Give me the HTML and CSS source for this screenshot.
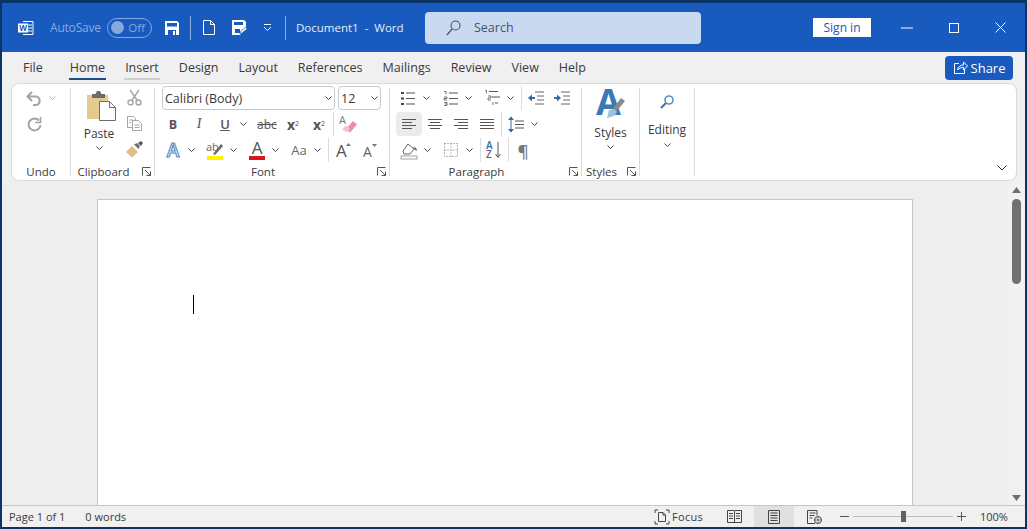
FILE: index.html
```html
<!DOCTYPE html>
<html lang="en">
<head>
  <meta charset="UTF-8" />
  <title>Document1 - Word</title>
  <link rel="stylesheet" href="styles.css">
</head>
<body>
  <svg class="defs" width="0" height="0">
    <symbol id="caret" viewBox="0 0 7 4"><path d="M.5.5l3 3 3-3" fill="none" stroke="#444" stroke-width="1"/></symbol>
    <symbol id="launch" viewBox="0 0 9 9"><path d="M.5 8.500V.5h8M3 3l5.500 5.500M8.500 4.500v4h-4" fill="none" stroke="#555"/></symbol>
  </svg>

  <div class="window">
    <!-- title bar -->
    <header class="titlebar">
      <svg class="tb-word" width="16" height="16" viewBox="0 0 16 16">
        <path d="M5 1.500h10v13H5" fill="none" stroke="#fff"/>
        <path d="M10 5h4M10 8h4M10 11h4" stroke="#fff"/>
        <rect x="0" y="3.500" width="10" height="9" fill="#fff"/>
        <text x="5" y="11" text-anchor="middle" class="tb-w">W</text>
      </svg>
      <span class="autosave">AutoSave</span>
      <span class="toggle"><i></i><b>Off</b></span>
      <svg class="tb-save" width="14" height="14" viewBox="0 0 14 14">
        <path d="M0 0h12l2 2v12H0z" fill="#fff"/>
        <path d="M2 2h10v3.500H2zM3 9h8v5H3z" fill="#185abd"/>
        <path d="M8 10h2v4H8z" fill="#fff"/>
      </svg>
      <span class="tb-sep"></span>
      <svg class="tb-new" width="12" height="15" viewBox="0 0 12 15">
        <path d="M.5.5h7l4 4v10H.500zM7.500.5v4h4" fill="none" stroke="#fff"/>
      </svg>
      <svg class="tb-saveas" width="15" height="15" viewBox="0 0 15 15">
        <path d="M0 0h12l2 2v6l-6 7H0z" fill="#fff"/>
        <path d="M2 2h9v3H2zM3 9h5v4H3z" fill="#185abd"/>
        <path d="M8 14l1-3 5-4 1 2-5 4z" fill="#fff" stroke="#185abd" stroke-width=".7"/>
      </svg>
      <svg class="tb-more" width="9" height="7" viewBox="0 0 9 7">
        <path d="M1 .5h7" stroke="#fff"/><path d="M1 3l3.500 3.500L8 3" fill="none" stroke="#fff"/>
      </svg>
      <span class="tb-sep tb-sep2"></span>
      <span class="doc-title">Document1&nbsp; - &nbsp;Word</span>
      <div class="search">
        <svg width="15" height="16" viewBox="0 0 15 16">
          <circle cx="9.500" cy="5.500" r="4.500" fill="none" stroke="#44546a" stroke-width="1.100"/>
          <path d="M6 9L1 15" stroke="#44546a" stroke-width="1.200"/>
        </svg>
        <span>Search</span>
      </div>
      <span class="signin">Sign in</span>
      <div class="winbtn"><svg width="12" height="2" viewBox="0 0 12 2"><path d="M0 1h12" stroke="#fff"/></svg></div>
      <div class="winbtn"><svg width="10" height="10" viewBox="0 0 10 10"><rect x=".5" y=".5" width="9" height="9" fill="none" stroke="#fff"/></svg></div>
      <div class="winbtn"><svg width="11" height="11" viewBox="0 0 11 11"><path d="M.5.5l10 10M10.500.5l-10 10" stroke="#fff"/></svg></div>
    </header>

    <!-- tabs -->
    <nav class="tabs">
      <span class="tab tab-file">File</span>
      <span class="tab active">Home</span>
      <span class="tab hover">Insert</span>
      <span class="tab">Design</span>
      <span class="tab">Layout</span>
      <span class="tab">References</span>
      <span class="tab">Mailings</span>
      <span class="tab">Review</span>
      <span class="tab">View</span>
      <span class="tab">Help</span>
      <span class="share">
        <svg width="15" height="15" viewBox="0 0 15 15"><path d="M6 3.500H1.500v10h10V9M4.500 10c.5-3.500 3-5 6-5V2l4 4-4 4V7.500c-2.500 0-4.500.5-6 2.500z" fill="none" stroke="#fff"/></svg>
        Share
      </span>
    </nav>

    <!-- ribbon -->
    <section class="ribbon">
      <div class="group g-undo">
        <div class="rows">
          <div class="row row-top">
            <span class="tool">
              <svg width="16" height="15" viewBox="0 0 16 15"><path d="M6 1L1.500 5.500 6 10M2 5.500h8a4.300 4.300 0 0 1 0 8.500H7" fill="none" stroke="#a3a3a3" stroke-width="2"/></svg>
            </span>
            <span class="caret light"><svg width="7" height="4"><use href="#caret"/></svg></span>
          </div>
          <div class="row">
            <span class="tool">
              <svg width="15" height="15" viewBox="0 0 15 15"><path d="M12 3.500A6 6 0 1 0 13.500 8" fill="none" stroke="#a3a3a3" stroke-width="2"/><path d="M13.500 0v5.500H8" fill="none" stroke="#a3a3a3" stroke-width="1.600"/></svg>
            </span>
          </div>
        </div>
        <div class="group-label">Undo</div>
      </div>
      <span class="group-sep"></span>

      <div class="group g-clip">
        <div class="clip-body">
          <div class="big-btn paste">
            <svg class="paste-ico" width="29" height="30" viewBox="0 0 29 30">
              <rect x="0" y="4" width="21" height="24" fill="#e6c98c"/>
              <path d="M5 3h3.500l1.500-3h3l1.500 3H18v4H5z" fill="#6b6b6b"/>
              <path d="M12.500 10.500h10l6 6v13h-16z" fill="#fff" stroke="#6e6e6e"/>
              <path d="M22.500 10.500v6h6" fill="none" stroke="#6e6e6e"/>
            </svg>
            <span>Paste</span>
            <svg width="7" height="4"><use href="#caret"/></svg>
          </div>
          <div class="stack">
            <span class="tool">
              <svg width="15" height="16" viewBox="0 0 15 16" fill="none" stroke="#a6a6a6" stroke-width="1.400"><path d="M3 0l7 10M12 0L5 10"/><circle cx="3.500" cy="12.500" r="2.500"/><circle cx="11.500" cy="12.500" r="2.500"/></svg>
            </span>
            <span class="tool">
              <svg width="15" height="15" viewBox="0 0 15 15" fill="#fff" stroke="#a6a6a6"><path d="M.5.5h6l2 2v9h-8z"/><path d="M5.500 4.500h6l3 3v7h-9z"/><path d="M2 4h4M2 6.500h2M7.500 9h5M7.500 11.500h5"/></svg>
            </span>
            <span class="tool">
              <svg width="17" height="17" viewBox="0 0 17 17"><path d="M0 11l6-6 6 6-6 5.500z" fill="#e0bd85"/><path d="M8 3.500l3-1.500 3 3-1.500 3z" fill="#6d6d6d"/><path d="M12 2l3-2 2 2-2 3z" fill="#555"/></svg>
            </span>
          </div>
        </div>
        <div class="group-label with-launch"><span>Clipboard</span><svg width="9" height="9"><use href="#launch"/></svg></div>
      </div>
      <span class="group-sep"></span>

      <div class="group g-font">
        <div class="rows">
          <div class="row row-top selects">
            <span class="select sel-font">Calibri (Body)<svg width="7" height="4"><use href="#caret"/></svg></span>
            <span class="select sel-size">12<svg width="7" height="4"><use href="#caret"/></svg></span>
          </div>
          <div class="row">
            <span class="tool fx fx-b">B</span>
            <span class="tool fx fx-i">I</span>
            <span class="tool fx fx-u">U</span>
            <span class="caret"><svg width="7" height="4"><use href="#caret"/></svg></span>
            <span class="tool fx fx-s">abc</span>
            <span class="tool fx fx-x">x<sub>2</sub></span>
            <span class="tool fx fx-x">x<sup>2</sup></span>
            <span class="sep sep-gap1"></span>
            <span class="tool">
              <svg width="18" height="18" viewBox="0 0 18 18"><text x="0" y="9" class="ico-txt">A</text><path d="M7 14l7-8 4 3.500-7 8z" fill="#ee8fa0"/><path d="M3 15l4-5 4 4-2.500 3z" fill="#f6c3cb"/></svg>
            </span>
          </div>
          <div class="row">
            <span class="tool">
              <svg width="18" height="18" viewBox="0 0 18 18"><text x="9" y="16" text-anchor="middle" class="ico-a-fx">A</text></svg>
            </span>
            <span class="caret"><svg width="7" height="4"><use href="#caret"/></svg></span>
            <span class="tool">
              <svg width="18" height="19" viewBox="0 0 18 19"><text x="0" y="10" class="ico-ab">ab</text><path d="M7 13L15 3l2 2-8 9z" fill="#6a6a6a"/><rect x="1" y="15" width="16" height="4" fill="#fff200"/></svg>
            </span>
            <span class="caret"><svg width="7" height="4"><use href="#caret"/></svg></span>
            <span class="tool">
              <svg width="18" height="19" viewBox="0 0 18 19"><text x="9" y="13" text-anchor="middle" class="ico-big">A</text><rect x="1" y="15" width="16" height="4" fill="#d81818"/></svg>
            </span>
            <span class="caret"><svg width="7" height="4"><use href="#caret"/></svg></span>
            <span class="tool fx fx-aa">Aa</span>
            <span class="caret"><svg width="7" height="4"><use href="#caret"/></svg></span>
            <span class="sep"></span>
            <span class="tool tool-gap">
              <svg width="16" height="16" viewBox="0 0 16 16"><text x="0" y="15" class="ico-big">A</text><path d="M10 4l2.500-3L15 4z" fill="#777"/></svg>
            </span>
            <span class="tool">
              <svg width="15" height="15" viewBox="0 0 15 15"><text x="0" y="14" class="ico-mid">A</text><path d="M9 1h5l-2.500 3z" fill="#777"/></svg>
            </span>
          </div>
        </div>
        <div class="group-label with-launch"><span>Font</span><svg width="9" height="9"><use href="#launch"/></svg></div>
      </div>
      <span class="group-sep"></span>

      <div class="group g-para">
        <div class="rows">
          <div class="row row-top para-top">
            <span class="tool">
              <svg width="14" height="15" viewBox="0 0 14 15"><path d="M5 2h9M5 7.500h9M5 13h9" stroke="#555"/><path d="M0 1h3v2H0zM0 6.500h3v2H0zM0 12h3v2H0z" fill="#444"/></svg>
            </span>
            <span class="caret"><svg width="7" height="4"><use href="#caret"/></svg></span>
            <span class="tool">
              <svg width="15" height="15" viewBox="0 0 15 15"><path d="M6 2h9M6 7.500h9M6 13h9" stroke="#555"/><path d="M1 .5h2v3M1 6h3v1.500H1V9h3M1 11.500h3v3H1M2 13h2" fill="none" stroke="#555" stroke-width=".8"/></svg>
            </span>
            <span class="caret"><svg width="7" height="4"><use href="#caret"/></svg></span>
            <span class="tool">
              <svg width="16" height="16" viewBox="0 0 16 16"><path d="M5 1.500h9M8 7h8M11 13h3" stroke="#555"/><path d="M1 .5h1.500v3M4 6h3v2H4v2h3M9 12v3" fill="none" stroke="#555" stroke-width=".8"/></svg>
            </span>
            <span class="caret"><svg width="7" height="4"><use href="#caret"/></svg></span>
            <span class="sep"></span>
            <span class="tool tool-gap1">
              <svg width="16" height="14" viewBox="0 0 16 14"><path d="M7 1h9M9 5h7M9 9h7M7 13h9" stroke="#666"/><path d="M0 7l4-3.500V6h3v2H4v2.500z" fill="#2f6da8"/></svg>
            </span>
            <span class="tool">
              <svg width="16" height="14" viewBox="0 0 16 14"><path d="M7 1h9M9 5h7M9 9h7M7 13h9" stroke="#666"/><path d="M7 7L3 3.500V6H0v2h3v2.500z" fill="#2f6da8"/></svg>
            </span>
          </div>
          <div class="row">
            <span class="tool is-on">
              <svg width="14" height="11" viewBox="0 0 14 11"><path d="M0 .5h14M0 3.500h10M0 6.500h14M0 9.500h10" stroke="#555"/></svg>
            </span>
            <span class="tool">
              <svg width="14" height="11" viewBox="0 0 14 11"><path d="M0 .5h14M2 3.500h10M0 6.500h14M2 9.500h10" stroke="#555"/></svg>
            </span>
            <span class="tool">
              <svg width="14" height="11" viewBox="0 0 14 11"><path d="M0 .5h14M4 3.500h10M0 6.500h14M4 9.500h10" stroke="#555"/></svg>
            </span>
            <span class="tool">
              <svg width="14" height="11" viewBox="0 0 14 11"><path d="M0 .5h14M0 3.500h14M0 6.500h14M0 9.500h14" stroke="#555"/></svg>
            </span>
            <span class="sep sep-gap1"></span>
            <span class="tool">
              <svg width="16" height="17" viewBox="0 0 16 17"><path d="M7 5h9M7 8.500h9M7 12h9" stroke="#555"/><path d="M3 1v15" stroke="#2f6da8"/><path d="M0 4l3-3.500L6 4zM0 13l3 3.500L6 13z" fill="#2f6da8"/></svg>
            </span>
            <span class="caret"><svg width="7" height="4"><use href="#caret"/></svg></span>
          </div>
          <div class="row">
            <span class="tool">
              <svg width="17" height="17" viewBox="0 0 17 17"><path d="M2 9l5-7 6 5-4 5H3z" fill="#fff" stroke="#666"/><path d="M12 5c2 0 4 1 4 4l-2-1z" fill="#6a6a6a"/><rect x="0" y="14" width="16" height="3" fill="#fff" stroke="#888" stroke-width=".8"/></svg>
            </span>
            <span class="caret"><svg width="7" height="4"><use href="#caret"/></svg></span>
            <span class="tool">
              <svg width="14" height="14" viewBox="0 0 14 14"><path d="M.5.5h13v13H.500zM7 .5v13M.5 7h13" fill="none" stroke="#777" stroke-dasharray="1 2"/></svg>
            </span>
            <span class="caret"><svg width="7" height="4"><use href="#caret"/></svg></span>
            <span class="sep sep-tight"></span>
            <span class="tool">
              <svg width="16" height="18" viewBox="0 0 16 18"><text x="0" y="8" class="ico-sort">A</text><text x="0" y="17" class="ico-sort ico-z">Z</text><path d="M12 1v15M9.500 13l2.500 3.500 2.500-3.500" fill="none" stroke="#555"/></svg>
            </span>
            <span class="sep sep-gap1"></span>
            <span class="tool fx fx-pil">¶</span>
          </div>
        </div>
        <div class="group-label with-launch"><span>Paragraph</span><svg width="9" height="9"><use href="#launch"/></svg></div>
      </div>
      <span class="group-sep"></span>

      <div class="group g-styles">
        <div class="big-body">
          <div class="big-btn">
            <svg width="29" height="31" viewBox="0 0 29 31">
              <text x="0" y="26" class="ico-styles">A</text>
              <path d="M16 21l9-12 4 3-9 11z" fill="#8a8a8a"/>
              <path d="M11 29l2-8 5-1 3 3-3 4z" fill="#9fc1de"/>
            </svg>
            <span>Styles</span>
            <svg width="7" height="4"><use href="#caret"/></svg>
          </div>
        </div>
        <div class="group-label with-launch"><span>Styles</span><svg width="9" height="9"><use href="#launch"/></svg></div>
      </div>
      <span class="group-sep"></span>

      <div class="group g-edit">
        <div class="big-body edit-body">
          <div class="big-btn">
            <svg width="14" height="14" viewBox="0 0 14 14"><circle cx="9" cy="5" r="4" fill="#fff" stroke="#5b8fbe" stroke-width="1.600"/><path d="M6 8l-5 5" stroke="#3f77aa" stroke-width="2.200"/></svg>
            <span>Editing</span>
            <svg width="7" height="4"><use href="#caret"/></svg>
          </div>
        </div>
      </div>
      <span class="group-sep"></span>

      <svg class="collapse" width="10" height="6" viewBox="0 0 10 6"><path d="M.5.5L5 5 9.500.5" fill="none" stroke="#333"/></svg>
    </section>

    <!-- document -->
    <main class="docarea">
      <div class="canvas">
        <div class="page"><span class="text-cursor"></span></div>
      </div>
      <aside class="scrollbar">
        <svg width="9" height="6" viewBox="0 0 9 6"><path d="M0 6l4.500-6L9 6z" fill="#6f6f6f"/></svg>
        <div class="thumb"></div>
        <svg class="arrow-down" width="9" height="6" viewBox="0 0 9 6"><path d="M0 0l4.500 6L9 0z" fill="#6f6f6f"/></svg>
      </aside>
    </main>

    <!-- status bar -->
    <footer class="status">
      <span class="st-page">Page 1 of 1</span>
      <span class="st-words">0 words</span>
      <div class="st-right">
        <svg width="14" height="14" viewBox="0 0 14 14"><path d="M0 3V0h3M11 0h3v3M14 11v3h-3M3 14H0v-3" fill="none" stroke="#444"/><path d="M3.500 2.500h4.500l2.500 2.500v6.500h-7zM8 2.500V5h2.500" fill="none" stroke="#444"/></svg>
        <span class="st-focus">Focus</span>
        <span class="view view-read">
          <svg width="15" height="13" viewBox="0 0 15 13"><path d="M.5.5h6.500l.5.5.5-.5h6.500v12H.500zM7.500 1v11.500M2 3.500h4M2 6h4M2 8.500h4M9 3.500h4M9 6h4M9 8.500h4" fill="none" stroke="#444"/></svg>
        </span>
        <span class="view view-print">
          <svg width="12" height="14" viewBox="0 0 12 14"><path d="M.5.5h11v13H.500zM2.500 3h7M2.500 5.500h7M2.500 8h7M2.500 10.500h7" fill="none" stroke="#444"/></svg>
        </span>
        <span class="view view-web">
          <svg width="15" height="14" viewBox="0 0 15 14"><path d="M8 13.500H.5V.5h9.500v5M2.500 3h6M2.500 5.500h5M2.500 8h3" fill="none" stroke="#444"/><circle cx="11" cy="10" r="3.500" fill="#f0f0f0" stroke="#444"/><path d="M7.500 10h7M11 6.500v7" stroke="#444" stroke-width=".7"/></svg>
        </span>
        <span class="zoom-minus"></span>
        <div class="slider"><span class="slider-knob"></span></div>
        <svg class="zoom-plus" width="9" height="9" viewBox="0 0 9 9"><path d="M0 4.500h9M4.500 0v9" stroke="#555"/></svg>
        <span class="st-zoom">100%</span>
      </div>
    </footer>
  </div>
</body>
</html>
```

FILE: styles.css
```css
/* --- reset ---------------------------------------------------------- */
* {
  margin: 0;
  padding: 0;
  box-sizing: border-box;
}

:root {
  --word: #185abd;
  --chrome: #f0f0f0;
  --line: #c6c6c6;
  --ink: #333;
}

html, body {
  height: 100%;
  overflow: hidden;
  background: #0a3566;
  font-family: "Open Sans", "Noto Sans", Arial, sans-serif;
  font-size: 12px;
  color: var(--ink);
}

svg {
  display: block;
  flex: none;
  overflow: visible;
}

.defs {
  position: absolute;
}

.window {
  height: 524px;
  margin: 3px 2px 0;
  display: flex;
  flex-direction: column;
  background: var(--chrome);
}

/* --- title bar ------------------------------------------------------ */
.titlebar {
  height: 49px;
  flex: none;
  display: flex;
  align-items: center;
  background: var(--word);
  padding-left: 16px;
  color: #fff;
}

.tb-w {
  font-size: 8px;
  font-weight: 700;
  fill: var(--word);
}

.autosave {
  width: 50px;
  margin-left: 16px;
  font-size: 12px;
  letter-spacing: -0.2px;
  white-space: nowrap;
  color: #86a9e2;
}

.toggle {
  width: 45px;
  height: 20px;
  margin-left: 7px;
  padding: 0 6px 0 3px;
  display: flex;
  align-items: center;
  justify-content: space-between;
  border: 1px solid #86a9e2;
  border-radius: 10px;
  color: #86a9e2;
  font-size: 11.500px;
}

.toggle i {
  width: 13px;
  height: 13px;
  border-radius: 50%;
  background: #86a9e2;
}

.toggle b {
  font-weight: 400;
}

.tb-save {
  margin-left: 13px;
}

.tb-sep {
  width: 1px;
  height: 24px;
  margin-left: 11px;
  background: #8fb0e3;
}

.tb-new {
  margin-left: 12px;
}

.tb-saveas {
  margin-left: 17px;
}

.tb-more {
  margin-left: 16px;
}

.tb-sep2 {
  margin-left: 13px;
}

.doc-title {
  width: 129px;
  margin-left: 10px;
  font-size: 11.500px;
  white-space: nowrap;
  color: #e6edf8;
}

.search {
  width: 276px;
  height: 32px;
  display: flex;
  align-items: center;
  gap: 13px;
  padding-left: 21px;
  background: #c9d9ef;
  border-radius: 4px;
  color: #44546a;
  font-size: 12.500px;
}

.signin {
  width: 58px;
  height: 19px;
  margin-left: 112px;
  margin-right: 12px;
  display: flex;
  align-items: center;
  justify-content: center;
  background: #fff;
  color: #1b5ab5;
  font-size: 12px;
}

.winbtn {
  width: 47px;
  height: 100%;
  display: flex;
  align-items: center;
  justify-content: center;
}

/* --- tabs ----------------------------------------------------------- */
.tabs {
  height: 31px;
  flex: none;
  display: flex;
  align-items: center;
  gap: 20px;
  padding-left: 21px;
  font-size: 12.500px;
}

.tab {
  position: relative;
  white-space: nowrap;
  color: #3a3a3a;
}

.tab-file {
  margin-right: 7px;
}

.tab.active::after,
.tab.hover::after {
  content: "";
  position: absolute;
  left: -1px;
  right: -1px;
  top: 19px;
  height: 2px;
  background: #1f4e86;
}

.tab.hover::after {
  background: #cfcfcf;
}

.share {
  width: 68px;
  height: 24px;
  margin-left: auto;
  margin-right: 12px;
  display: flex;
  align-items: center;
  justify-content: center;
  gap: 3px;
  background: var(--word);
  border-radius: 4px;
  color: #fff;
  font-size: 13px;
}

/* --- ribbon --------------------------------------------------------- */
.ribbon {
  height: 98px;
  flex: none;
  display: flex;
  margin: 0 8px 0 9px;
  padding-top: 2px;
  background: #fff;
  border: 1px solid #dadada;
  border-radius: 8px;
}

.group {
  display: flex;
  flex-direction: column;
  justify-content: space-between;
}

.group-sep {
  width: 1px;
  flex: none;
  margin: 2px 0 4px;
  background: #dcdcdc;
}

.group-label {
  height: 16px;
  margin-bottom: 1px;
  display: flex;
  align-items: center;
  justify-content: center;
  font-size: 11.500px;
  color: #3a3a3a;
}

.with-launch span {
  flex: 1;
  text-align: center;
}

.with-launch svg {
  margin: 0 3px 0 6px;
}

.g-undo { width: 58px; }
.g-clip { width: 83px; }
.g-font { width: 234px; }
.g-para { width: 191px; }
.g-styles { width: 57px; }
.g-edit { width: 54px; }

.g-font .rows { padding-left: 5px; }
.g-para .rows { padding-left: 6px; }
.g-undo .rows { padding-left: 9px; }

.row {
  height: 26px;
  display: flex;
  align-items: center;
}

.row-top {
  height: 24px;
  margin-bottom: 1px;
}

.para-top {
  margin-left: -1px;
}

.tool {
  width: 26px;
  height: 24px;
  flex: none;
  display: flex;
  align-items: center;
  justify-content: center;
}

.tool.is-on {
  background: #ebebeb;
  border-radius: 4px;
}

.tool-gap { margin-left: 2px; }
.tool-gap1 { margin-left: 1px; }

.caret {
  width: 16px;
  flex: none;
  padding-left: 2px;
}

.caret.light {
  opacity: 0.4;
}

.sep {
  width: 1px;
  height: 24px;
  flex: none;
  background: #dcdcdc;
}

.sep-gap1 { margin: 0 1px; }
.sep-tight { margin-right: 0; }

/* font controls */
.selects {
  gap: 3px;
  margin-left: 2px;
}

.select {
  height: 24px;
  display: flex;
  align-items: center;
  justify-content: space-between;
  padding: 0 2px 0 2px;
  border: 1px solid #c8c8c8;
  border-radius: 4px;
  font-size: 12.500px;
  color: #3a3a3a;
}

.sel-font { width: 173px; }
.sel-size { width: 43px; }

.fx {
  color: #555;
  font-size: 13px;
}

.fx-b { font-weight: 700; font-size: 12.500px; }
.fx-i { font-style: italic; font-family: "Liberation Serif", serif; font-size: 14px; }
.fx-u { text-decoration: underline; font-weight: 600; }
.fx-s { text-decoration: line-through; font-size: 12px; }
.fx-x { font-weight: 700; font-size: 14px; }
.fx-x sub, .fx-x sup { font-size: 7px; font-weight: 400; line-height: 0; }
.fx-aa { font-size: 13px; color: #666; }
.fx-pil { font-size: 17px; font-weight: 600; color: #777; }

.ico-txt { font-size: 11px; fill: #777; }
.ico-a-fx { font-size: 19px; font-weight: 600; fill: #e8f1fa; stroke: #4f86c0; stroke-width: 1; }
.ico-ab { font-size: 11px; fill: #666; }
.ico-big { font-size: 17px; fill: #555; }
.ico-mid { font-size: 14px; fill: #666; }
.ico-sort { font-size: 10px; font-weight: 600; fill: #2f6da8; }
.ico-z { fill: #7a4b8c; }
.ico-styles { font-size: 36px; font-weight: 700; fill: #3b7ab5; }

/* big buttons */
.big-btn {
  display: flex;
  flex-direction: column;
  align-items: center;
  font-size: 12px;
  color: #3a3a3a;
}

.big-btn span {
  margin: 5px 0 4px;
  line-height: 16px;
}

.clip-body {
  display: flex;
}

.paste {
  width: 44px;
  margin-left: 6px;
  padding-top: 5px;
}

.paste-ico {
  margin-left: 4px;
}

.stack .tool {
  height: 26px;
}

.stack .tool:first-child {
  height: 24px;
}

.big-body {
  padding-top: 3px;
}

.edit-body {
  padding-top: 9px;
}

.edit-body .big-btn span {
  margin: 13px 0 5px;
}

.collapse {
  margin-left: auto;
  margin-right: 9px;
  align-self: flex-end;
  margin-bottom: 9px;
}

/* --- document ------------------------------------------------------- */
.docarea {
  flex: 1;
  min-height: 0;
  display: flex;
  overflow: hidden;
  background: #eeeeee;
}

.canvas {
  flex: 1;
  display: flex;
  justify-content: center;
  padding-top: 18px;
  overflow: hidden;
}

.page {
  width: 816px;
  height: 1056px;
  padding: 95px;
  background: #fff;
  border: 1px solid var(--line);
}

.text-cursor {
  display: block;
  width: 1px;
  height: 19px;
  background: #000;
}

.scrollbar {
  width: 17px;
  flex: none;
  display: flex;
  flex-direction: column;
  align-items: center;
  padding: 6px 0 4px;
  background: #f1f1f1;
}

.thumb {
  width: 9px;
  height: 85px;
  margin-top: 6px;
  background: #717171;
  border-radius: 5px;
}

.arrow-down {
  margin-top: auto;
}

/* --- status bar ----------------------------------------------------- */
.status {
  height: 22px;
  flex: none;
  display: flex;
  align-items: center;
  border-top: 1px solid var(--line);
  padding-left: 7px;
  font-size: 11px;
  color: #3a3a3a;
}

.st-words {
  margin-left: 20px;
}

.st-right {
  margin-left: auto;
  height: 100%;
  display: flex;
  align-items: center;
}

.st-focus {
  margin-left: 3px;
  width: 33px;
  letter-spacing: 0.3px;
}

.view {
  width: 40px;
  height: 100%;
  display: flex;
  align-items: center;
  justify-content: center;
}

.view-read { margin-left: 9px; }
.view-print { background: #e0e0e0; }

.zoom-minus {
  width: 9px;
  height: 1px;
  margin-left: 6px;
  background: #555;
}

.slider {
  width: 100px;
  height: 1px;
  margin-left: 4px;
  display: flex;
  align-items: center;
  justify-content: center;
  background: #bdbdbd;
}

.slider-knob {
  width: 5px;
  height: 11px;
  background: #5f5f5f;
}

.zoom-plus {
  margin-left: 4px;
}

.st-zoom {
  width: 59px;
  padding-left: 14px;
}
```
